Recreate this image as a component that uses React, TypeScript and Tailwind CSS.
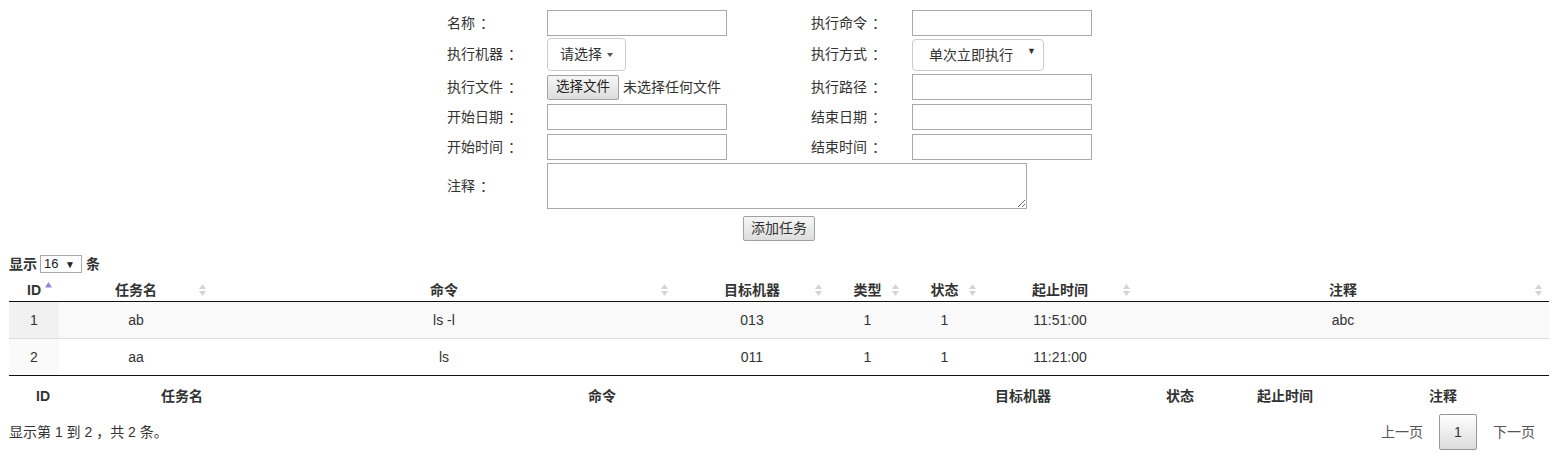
import React from "react"

const font = { fontFamily: '"Liberation Sans", "Noto Sans CJK SC", sans-serif' }

function SortIcon({ asc }: { asc?: boolean }) {
	if (asc)
		return (
			<svg width="7" height="12" viewBox="0 0 7 12" className="absolute right-[7px] top-[2px]">
				<polygon points="3.5,0 7,5.5 0,5.5" fill="#8a8ad6" />
			</svg>
		)
	return (
		<svg width="7" height="12" viewBox="0 0 7 12" className="absolute right-[7px] top-[4px]">
			<polygon points="3.5,0 7,5 0,5" fill="#d4d4d4" />
			<polygon points="0,7 7,7 3.5,12" fill="#d4d4d4" />
		</svg>
	)
}

const cols = [
	{ name: "ID", w: 50 },
	{ name: "任务名", w: 154 },
	{ name: "命令", w: 462 },
	{ name: "目标机器", w: 154 },
	{ name: "类型", w: 77 },
	{ name: "状态", w: 77 },
	{ name: "起止时间", w: 154 },
	{ name: "注释", w: 412 },
]

const rows = [
	["1", "ab", "ls -l", "013", "1", "1", "11:51:00", "abc"],
	["2", "aa", "ls", "011", "1", "1", "11:21:00", ""],
]

const foot = [
	{ name: "ID", w: 68 },
	{ name: "任务名", w: 210 },
	{ name: "命令", w: 630 },
	{ name: "目标机器", w: 212 },
	{ name: "状态", w: 102 },
	{ name: "起止时间", w: 108 },
	{ name: "注释", w: 208 },
]

function Label({ text, w }: { text: string; w: string }) {
	return (
		<div className={`${w} shrink-0`}>
			{text}
			<span className="ml-[5px]">：</span>
		</div>
	)
}

function Input() {
	return <div className="h-[26px] w-[180px] border border-[#a9a9a9] bg-white" />
}

export default function App() {
	return (
		<div className="w-[1553px] h-[467px] bg-white text-[14px] text-[#333]" style={font}>
			<section className="pl-[447px] pt-[9px]">
				<div className="flex items-center h-[28px]">
					<Label text="名称" w="w-[100px]" />
					<Input />
					<div className="w-[84px]" />
					<Label text="执行命令" w="w-[101px]" />
					<Input />
				</div>
				<div className="flex items-center h-[35px]">
					<Label text="执行机器" w="w-[100px]" />
					<div className="flex items-center h-[33px] w-[79px] border border-[#ccc] rounded-[4px] pl-[12px]">
						<span>请选择</span>
						<span className="ml-[5px] border-t-[4px] border-t-[#555] border-x-[3.5px] border-x-transparent" />
					</div>
					<div className="w-[185px]" />
					<Label text="执行方式" w="w-[101px]" />
					<div className="flex items-center h-[32px] w-[132px] border border-[#ccc] rounded-[4px] pl-[16px] pr-[7px]">
						<span className="pt-[2px]">单次立即执行</span>
						<span className="ml-auto mb-[6px] text-[9px]">▼</span>
					</div>
				</div>
				<div className="flex items-center h-[30px]">
					<Label text="执行文件" w="w-[100px]" />
					<div className="flex items-center justify-center h-[25px] w-[72px] border border-[#a0a0a0] rounded-[2px] bg-gradient-to-b from-[#f6f6f6] to-[#dddddd] text-[13.5px] text-[#222]">
						选择文件
					</div>
					<span className="ml-[4px] w-[188px]">未选择任何文件</span>
					<Label text="执行路径" w="w-[101px]" />
					<Input />
				</div>
				<div className="flex items-center h-[30px]">
					<Label text="开始日期" w="w-[100px]" />
					<Input />
					<div className="w-[84px]" />
					<Label text="结束日期" w="w-[101px]" />
					<Input />
				</div>
				<div className="flex items-center h-[30px]">
					<Label text="开始时间" w="w-[100px]" />
					<Input />
					<div className="w-[84px]" />
					<Label text="结束时间" w="w-[101px]" />
					<Input />
				</div>
				<div className="flex items-center h-[48px]">
					<Label text="注释" w="w-[100px]" />
					<textarea
						readOnly
						className="h-[46px] w-[480px] border border-[#a9a9a9] bg-white outline-none"
					/>
				</div>
				<div className="mt-[6px] ml-[296px] flex items-center justify-center h-[25px] w-[72px] border border-[#a0a0a0] rounded-[2px] bg-gradient-to-b from-[#f6f6f6] to-[#dddddd]">
					添加任务
				</div>
			</section>

			<section className="pl-[9px] mt-[13px]">
				<div className="flex items-center h-[20px]">
					<span className="font-bold">显示</span>
					<div className="ml-[3px] mr-[4px] flex items-center h-[18px] w-[42px] border border-[#a9a9a9] pl-[3px] pr-[6px] text-[13px] text-[#222]">
						<span>16</span>
						<span className="ml-auto text-[10px]">▼</span>
					</div>
					<span className="font-bold">条</span>
				</div>

				<table className="mt-[6px] w-[1540px] table-fixed border-collapse">
					<colgroup>
						{cols.map((c) => (
							<col key={c.name} style={{ width: c.w }} />
						))}
					</colgroup>
					<thead>
						<tr className="h-[21px] border-b border-[#111]">
							{cols.map((c, i) => (
								<th key={c.name} className="relative p-0 text-center font-bold text-[#333]">
									{c.name}
									<SortIcon asc={i === 0} />
								</th>
							))}
						</tr>
					</thead>
					<tbody>
						{rows.map((r, ri) => (
							<tr
								key={ri}
								className={
									ri === 0
										? "h-[37px] bg-[#f9f9f9] border-b border-[#dddddd]"
										: "h-[37px] bg-white border-b border-[#111]"
								}
							>
								{r.map((v, ci) => (
									<td
										key={ci}
										className={
											ci === 0
												? ri === 0
													? "p-0 text-center bg-[#f1f1f1]"
													: "p-0 text-center bg-[#fafafa]"
												: "p-0 text-center"
										}
									>
										{v}
									</td>
								))}
							</tr>
						))}
					</tbody>
				</table>

				<div className="flex h-[40px] items-center font-bold">
					{foot.map((f) => (
						<div key={f.name} className="text-center shrink-0" style={{ width: f.w }}>
							{f.name}
						</div>
					))}
				</div>

				<div className="flex h-[32px] w-[1540px] items-center justify-between">
					<span>显示第 1 到 2 ，共 2 条。</span>
					<div className="flex items-center text-[#555]">
						<span className="px-[14px] py-[7px]">上一页</span>
						<span className="ml-[2px] flex h-[36px] w-[38px] items-center justify-center border border-[#979797] rounded-[2px] bg-gradient-to-b from-[#ffffff] to-[#dcdcdc] text-[#333]">
							1
						</span>
						<span className="ml-[2px] px-[14px] py-[7px]">下一页</span>
					</div>
				</div>
			</section>
		</div>
	)
}
